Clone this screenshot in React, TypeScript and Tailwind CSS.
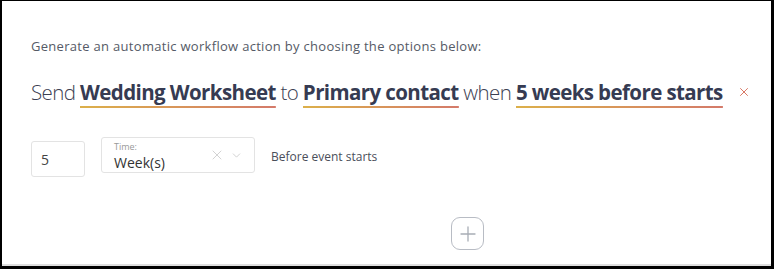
import { ChevronDown, X, Plus } from "lucide-react";

const font = { fontFamily: '"Open Sans", "Noto Sans", sans-serif' };

function Pick({ children }: { children: React.ReactNode }) {
  return (
    <span className="inline-block font-bold text-[#363b52] pb-[1px] bg-[linear-gradient(90deg,#dcb04a,#d47a6a)] bg-no-repeat bg-bottom bg-[length:100%_2px]">
      {children}
    </span>
  );
}

export default function App() {
  return (
    <div className="w-[774px] h-[269px] bg-white border-l-2 border-r-[3px] border-t border-b-[3px] border-black" style={font}>
      <div className="h-full flex flex-col border-b-2 border-[#dedede]">
        <p className="pt-[36px] pl-[29px] text-[13px] leading-[18px] tracking-[0.3px] text-[#555a66]">
          Generate an automatic workflow action by choosing the options below:
        </p>

        <div className="mt-[22px] pl-[29px] flex items-start">
          <p className="text-[20.5px] leading-[30px] tracking-[-0.6px] font-light text-[#3b4052] whitespace-nowrap">
            Send <Pick>Wedding Worksheet</Pick> to <Pick>Primary contact</Pick> when{" "}
            <Pick>5 weeks before starts</Pick>
          </p>
          <X className="ml-[14px] mt-[8px] text-[#d3654e]" size={14} strokeWidth={1.5} />
        </div>

        <div className="mt-[29px] pl-[29px] flex items-start gap-4">
          <div className="mt-[4px] w-[54px] h-[36px] border border-[#e3e3e3] rounded-[3px] flex items-center pl-[9px] text-[14px] text-[#444]">
            5
          </div>
          <div className="w-[154px] h-[36px] border border-[#e3e3e3] rounded-[3px] flex items-center pl-[12px] pr-[11px]">
            <div className="flex-1 flex flex-col gap-[2px] pt-[3px]">
              <span className="text-[9px] leading-[10px] text-[#999]">Time:</span>
              <span className="text-[14px] leading-[17px] text-[#333]">Week(s)</span>
            </div>
            <X className="text-[#c8c8c8]" size={16} strokeWidth={1.2} />
            <ChevronDown className="ml-[5px] text-[#c8c8c8]" size={13} strokeWidth={1.5} />
          </div>
          <span className="mt-[11px] text-[12px] text-[#4a4e5a]">Before event starts</span>
        </div>

        <div className="mt-auto mb-[14px] flex justify-center pl-[162px]">
          <button className="w-[33px] h-[33px] border border-[#b8bcc4] rounded-[9px] flex items-center justify-center text-[#a8adb5]">
            <Plus size={24} strokeWidth={1.3} />
          </button>
        </div>
      </div>
    </div>
  );
}
